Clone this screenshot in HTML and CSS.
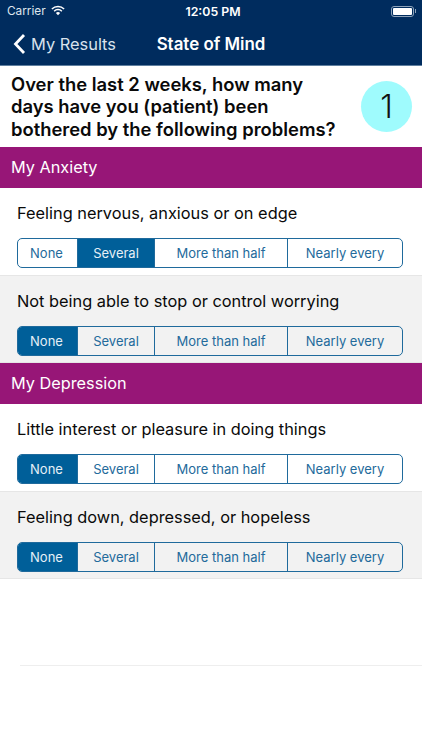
FILE: index.html
```html
<!DOCTYPE html>
<html lang="en">
<head>
<meta charset="utf-8">
<title>State of Mind</title>
<link rel="stylesheet" href="styles.css">
</head>
<body>
<div class="app">
  <header class="topbar">
    <div class="status">
      <div class="status-left">
        <span>Carrier</span>
        <svg class="wifi" width="14" height="11" viewBox="0 0 16 12"><path d="M8 11.5 5.6 8.9a3.4 3.4 0 0 1 4.8 0z" fill="#fff"/><path d="M3.6 6.8a6.2 6.2 0 0 1 8.8 0M1 4.2a9.9 9.9 0 0 1 14 0" fill="none" stroke="#fff" stroke-width="1.7"/></svg>
      </div>
      <div class="status-time">12:05 PM</div>
      <div class="status-right">
        <div class="battery"><div class="battery-fill"></div></div>
        <div class="battery-cap"></div>
      </div>
    </div>
    <nav class="nav">
      <div class="back">
        <svg width="13" height="22" viewBox="0 0 13 22"><path d="M11 2 2.5 11 11 20" fill="none" stroke="#fff" stroke-width="2.8"/></svg>
        <span>My Results</span>
      </div>
      <div class="nav-title">State of Mind</div>
    </nav>
  </header>

  <section class="intro">
    <h1>Over the last 2 weeks, how many days have you (patient) been bothered by the following problems?</h1>
    <div class="badge">1</div>
  </section>

  <h2 class="section">My Anxiety</h2>
  <div class="row">
    <p>Feeling nervous, anxious or on edge</p>
    <div class="seg"><span class="s1">None</span><span class="s2 on">Several</span><span class="s3">More than half</span><span class="s4">Nearly every</span></div>
  </div>
  <div class="row alt">
    <p>Not being able to stop or control worrying</p>
    <div class="seg"><span class="s1 on">None</span><span class="s2">Several</span><span class="s3">More than half</span><span class="s4">Nearly every</span></div>
  </div>

  <h2 class="section">My Depression</h2>
  <div class="row">
    <p>Little interest or pleasure in doing things</p>
    <div class="seg"><span class="s1 on">None</span><span class="s2">Several</span><span class="s3">More than half</span><span class="s4">Nearly every</span></div>
  </div>
  <div class="row alt">
    <p>Feeling down, depressed, or hopeless</p>
    <div class="seg"><span class="s1 on">None</span><span class="s2">Several</span><span class="s3">More than half</span><span class="s4">Nearly every</span></div>
  </div>

  <div class="empty"><div class="rule"></div></div>
</div>
</body>
</html>
```
FILE: styles.css
```css
* { box-sizing: border-box; }
html, body { margin: 0; padding: 0; }
body {
  width: 422px;
  height: 750px;
  overflow: hidden;
  background: #fff;
  font-family: Inter, "Liberation Sans", sans-serif;
  color: #0a0a0a;
}
.app { display: flex; flex-direction: column; height: 750px; }

.topbar {
  height: 66px;
  background: #002c5e;
  border-bottom: 1px solid #5f7f9f;
  color: #fff;
}
.status {
  height: 22px;
  padding: 0 6px 0 7px;
  display: grid;
  grid-template-columns: 1fr auto 1fr;
  align-items: center;
  font-size: 11.8px;
}
.status-left { display: flex; align-items: center; gap: 5px; color: #dfe6ee; }
.wifi { display: block; margin-top: -2px; }
.status-time { font-weight: 600; font-size: 12.3px; margin-left: 3px; }
.status-right { display: flex; align-items: center; justify-content: flex-end; }
.battery {
  width: 23px;
  height: 11px;
  border: 1px solid #8ea3ba;
  border-radius: 3px;
  padding: 1px;
}
.battery-fill { height: 100%; background: #fff; border-radius: 1px; }
.battery-cap { width: 1.5px; height: 4px; background: #8ea3ba; margin-left: 1px; }

.nav {
  height: 43px;
  padding: 0 0 0 13px;
  display: grid;
  grid-template-columns: 1fr auto 1fr;
  align-items: center;
}
.back { display: flex; align-items: center; gap: 5px; font-size: 16.4px; color: #d9e2ec; }
.back svg { display: block; }
.nav-title { font-size: 16.9px; font-weight: 600; margin-left: -13px; }

.intro {
  height: 81px;
  padding: 0 10px 0 11px;
  display: flex;
  align-items: center;
  justify-content: space-between;
}
.intro h1 {
  margin: 0;
  width: 335px;
  font-size: 18.4px;
  line-height: 22.5px;
  font-weight: 600;
}
.badge {
  width: 51px;
  height: 51px;
  border-radius: 50%;
  background: #9ffbfd;
  display: flex;
  align-items: center;
  justify-content: center;
  font-size: 32px;
  font-weight: 300;
  color: #111;
}

.section {
  margin: 0;
  height: 41px;
  padding: 0 11px 2px;
  display: flex;
  align-items: center;
  background: #971677;
  color: #fff;
  font-size: 16.3px;
  font-weight: 400;
}

.row {
  height: 87.5px;
  padding: 0 19px 0 17px;
  border-bottom: 1px solid #e6e6e6;
  display: flex;
  flex-direction: column;
}
.row.alt { background: #f2f2f2; }
.row p {
  margin: 14px 0 0;
  height: 36px;
  font-size: 16.35px;
  line-height: 22px;
}
.seg {
  height: 30px;
  display: grid;
  grid-template-columns: 59px 77px 133px 1fr;
  border: 1px solid #1f6a9c;
  border-radius: 5px;
  overflow: hidden;
  font-size: 13px;
  color: #236a9b;
}
.seg span {
  display: flex;
  align-items: center;
  justify-content: center;
  border-left: 1px solid #1f6a9c;
}
.seg .s1 { border-left: 0; padding-right: 2px; }
.seg .on { background: #005f99; color: #e6f0f7; }

.empty { flex: 1; padding: 86px 0 0 20px; }
.rule { height: 1px; background: #eeeeee; }
```
